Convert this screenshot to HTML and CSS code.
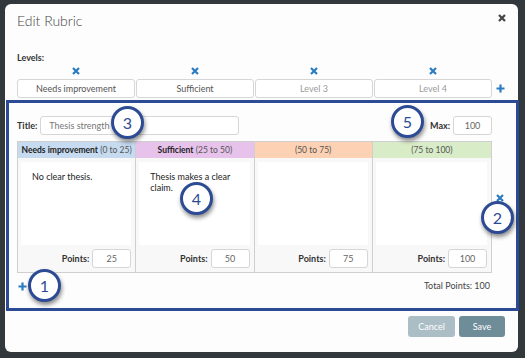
FILE: index.html
```html
<!DOCTYPE html>
<html lang="en">
<head>
    <meta charset="UTF-8">
    <title>Edit Rubric</title>
    <link rel="stylesheet" href="styles.css">
</head>
<body>
    <div class="modal">
        <div class="modal-header">
            <h2>Edit Rubric</h2>
            <svg class="close" width="8" height="8" viewBox="0 0 8 8"><path d="M1 1L7 7M7 1L1 7"/></svg>
        </div>

        <div class="modal-body">
            <div class="levels-label">Levels:</div>
            <div class="levels">
                <div class="level-grid">
                    <div class="level">
                        <svg class="x-icon" width="8" height="8" viewBox="0 0 8 8"><path d="M1 1L7 7M7 1L1 7"/></svg>
                        <input class="level-input" value="Needs improvement">
                    </div>
                    <div class="level">
                        <svg class="x-icon" width="8" height="8" viewBox="0 0 8 8"><path d="M1 1L7 7M7 1L1 7"/></svg>
                        <input class="level-input" value="Sufficient">
                    </div>
                    <div class="level">
                        <svg class="x-icon" width="8" height="8" viewBox="0 0 8 8"><path d="M1 1L7 7M7 1L1 7"/></svg>
                        <input class="level-input" placeholder="Level 3">
                    </div>
                    <div class="level">
                        <svg class="x-icon" width="8" height="8" viewBox="0 0 8 8"><path d="M1 1L7 7M7 1L1 7"/></svg>
                        <input class="level-input" placeholder="Level 4">
                    </div>
                </div>
                <svg class="plus-icon" width="9" height="9" viewBox="0 0 9 9"><path d="M4.5 0.5V8.5M0.5 4.5H8.5"/></svg>
            </div>

            <div class="criterion">
                <div class="title-row">
                    <label>Title:</label>
                    <input class="title-input" placeholder="Thesis strength">
                    <span class="spacer"></span>
                    <label>Max:</label>
                    <input class="small-input" value="100">
                </div>

                <div class="rubric-row">
                    <div class="rubric">
                        <div class="col">
                            <div class="col-head blue"><b>Needs improvement</b> (0 to 25)</div>
                            <div class="col-body">
                                <div class="desc">No clear thesis.</div>
                                <div class="points"><label>Points:</label><input class="small-input" value="25"></div>
                            </div>
                        </div>
                        <div class="col">
                            <div class="col-head pink"><b>Sufficient</b> (25 to 50)</div>
                            <div class="col-body">
                                <div class="desc">Thesis makes a clear claim.</div>
                                <div class="points"><label>Points:</label><input class="small-input" value="50"></div>
                            </div>
                        </div>
                        <div class="col">
                            <div class="col-head peach">(50 to 75)</div>
                            <div class="col-body">
                                <div class="desc"></div>
                                <div class="points"><label>Points:</label><input class="small-input" value="75"></div>
                            </div>
                        </div>
                        <div class="col">
                            <div class="col-head green">(75 to 100)</div>
                            <div class="col-body">
                                <div class="desc"></div>
                                <div class="points"><label>Points:</label><input class="small-input" value="100"></div>
                            </div>
                        </div>
                    </div>
                    <svg class="x-icon remove-row" width="8" height="8" viewBox="0 0 8 8"><path d="M1 1L7 7M7 1L1 7"/></svg>
                </div>

                <div class="row-foot">
                    <svg class="plus-icon" width="9" height="9" viewBox="0 0 9 9"><path d="M4.5 0.5V8.5M0.5 4.5H8.5"/></svg>
                    <span class="total">Total Points: 100</span>
                </div>
            </div>
        </div>

        <div class="modal-footer">
            <button class="btn cancel">Cancel</button>
            <button class="btn save">Save</button>
        </div>
    </div>

    <!-- tutorial annotations -->
    <div class="highlight"></div>
    <div class="marker" style="left: 28px; top: 269px;">1</div>
    <div class="marker" style="left: 481px; top: 201px;">2</div>
    <div class="marker" style="left: 111px; top: 106px;">3</div>
    <div class="marker" style="left: 180px; top: 182px;">4</div>
    <div class="marker" style="left: 391px; top: 105px;">5</div>
</body>
</html>
```

FILE: styles.css
```css
body {
    margin: 0;
    padding: 4px 0 0 5px;
    height: 358px;
    box-sizing: border-box;
    background: #33383d;
    font-family: Lato, "Liberation Sans", sans-serif;
    font-size: 9px;
    color: #333;
    overflow: hidden;
    position: relative;
}

.modal {
    width: 513px;
    height: 348px;
    background: #fdfdfd;
    border-radius: 6px;
    box-sizing: border-box;
    padding: 0 13px 0 12px;
    display: flex;
    flex-direction: column;
}

.modal-header {
    display: flex;
    justify-content: space-between;
    align-items: flex-start;
    height: 36px;
}

.modal-header h2 {
    margin: 9px 0 0;
    font-size: 14px;
    line-height: 16px;
    font-weight: 300;
    color: #444;
}

.close {
    margin: 10px -1px 0 0;
    stroke: #444;
    stroke-width: 2.2;
}

.x-icon {
    stroke: #2b7bc1;
    stroke-width: 2.2;
}

.plus-icon {
    stroke: #2b7bc1;
    stroke-width: 2.2;
}

.levels-label {
    margin-top: 12px;
    line-height: 12px;
    font-weight: bold;
}

.levels {
    display: flex;
    align-items: flex-end;
}

.level-grid {
    width: 475px;
    display: grid;
    grid-template-columns: repeat(4, 1fr);
    gap: 1px;
}

.level {
    display: flex;
    flex-direction: column;
    align-items: center;
}

.level .x-icon {
    margin: 3px 0 4px;
}

.level-input {
    width: 100%;
    height: 19px;
    box-sizing: border-box;
    border: 1px solid #d6d6d6;
    border-radius: 3px;
    background: #fff;
    font-family: inherit;
    font-size: 9px;
    color: #555;
    text-align: center;
    padding: 0 4px;
}

.level-input::placeholder {
    color: #9a9a9a;
}

.levels .plus-icon {
    margin: 0 0 5px 4px;
}

.criterion {
    margin-top: 18px;
}

.title-row {
    display: flex;
    align-items: center;
    width: 475px;
}

.title-row label {
    font-weight: bold;
    margin-right: 3px;
}

.title-input {
    width: 199px;
    height: 19px;
    box-sizing: border-box;
    border: 1px solid #d6d6d6;
    border-radius: 3px;
    background: #fff;
    font-family: inherit;
    font-size: 9px;
    padding: 0 8px;
}

.title-input::placeholder {
    color: #777;
}

.spacer {
    flex: 1;
}

.small-input {
    width: 39px;
    height: 19px;
    box-sizing: border-box;
    border: 1px solid #d6d6d6;
    border-radius: 3px;
    background: #fff;
    font-family: inherit;
    font-size: 9px;
    color: #666;
    text-align: center;
    padding: 0;
}

.rubric-row {
    display: flex;
    align-items: center;
    margin-top: 6px;
}

.rubric {
    width: 475px;
    height: 132px;
    box-sizing: border-box;
    display: grid;
    grid-template-columns: repeat(4, 1fr);
    border: 1px solid #cfcfcf;
}

.col {
    display: flex;
    flex-direction: column;
    border-right: 1px solid #cfcfcf;
}

.col:last-child {
    border-right: none;
}

.col-head {
    height: 16px;
    line-height: 16px;
    font-size: 8.5px;
    text-align: center;
    white-space: nowrap;
    color: #555;
}

.col-head b {
    color: #222;
}

.blue { background: #c6dbf0; }
.pink { background: #e7c3ec; }
.peach { background: #fcd1b4; }
.green { background: #d8ecc7; }

.col-body {
    flex: 1;
    background: #f8f8f8;
    display: flex;
    flex-direction: column;
    padding: 4px 4px 4px 3px;
}

.desc {
    flex: 1;
    background: #fff;
    padding: 9px 10px 0 11px;
    line-height: 11px;
    color: #222;
}

.points {
    display: flex;
    justify-content: flex-end;
    align-items: center;
    margin-top: 4px;
}

.points label {
    font-weight: bold;
    margin-right: 3px;
}

.remove-row {
    margin: 0 0 19px 4px;
}

.row-foot {
    display: flex;
    justify-content: space-between;
    align-items: center;
    width: 475px;
    margin-top: 7px;
    line-height: 12px;
}

.row-foot .plus-icon {
    margin-left: 1px;
}

.total {
    color: #444;
    margin-right: 2px;
}

.modal-footer {
    display: flex;
    justify-content: flex-end;
    gap: 4px;
    margin-top: 24px;
}

.btn {
    height: 21px;
    border: none;
    border-radius: 3px;
    color: #fff;
    font-family: inherit;
    font-size: 9px;
    cursor: pointer;
}

.cancel {
    width: 47px;
    background: #abbdc5;
}

.save {
    width: 46px;
    background: #6f8c99;
}

.highlight {
    position: absolute;
    left: 6px;
    top: 100px;
    width: 513px;
    height: 211px;
    box-sizing: border-box;
    border: 3px solid #2c4b94;
}

.marker {
    position: absolute;
    width: 33px;
    height: 33px;
    box-sizing: border-box;
    border: 3px solid #2c4b94;
    border-radius: 50%;
    background: #fff;
    box-shadow: 1px 3px 4px rgba(0, 0, 0, 0.45);
    color: #2c4b94;
    font-size: 16px;
    line-height: 27px;
    text-align: center;
}
```
